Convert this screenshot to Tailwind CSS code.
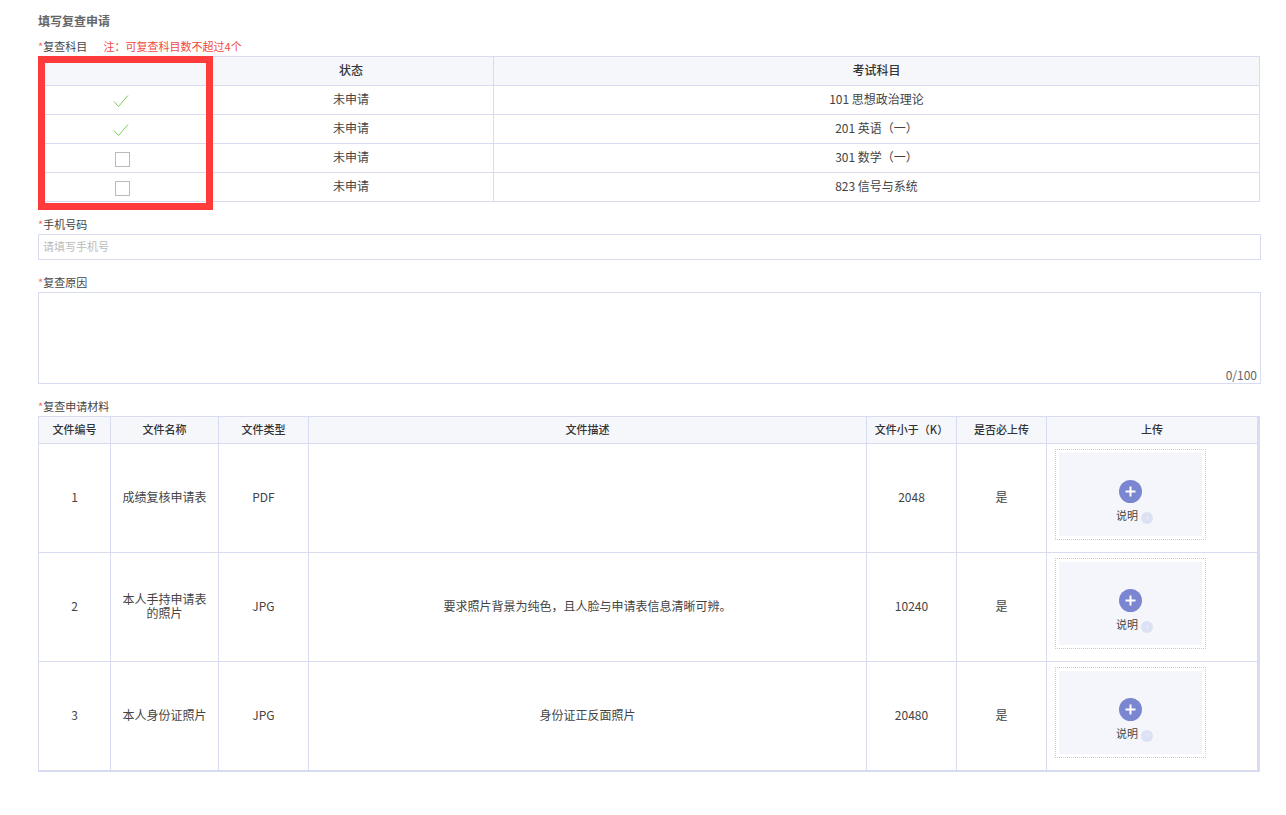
<!DOCTYPE html>
<html lang="zh-CN">
  <head>
    <meta charset="UTF-8" />
    <title>填写复查申请</title>
    <script src="https://cdn.jsdelivr.net/npm/@tailwindcss/browser@4"></script>
  </head>
  <body class="bg-white font-['Noto_Sans_CJK_SC','Noto_Sans',sans-serif] text-[11px] text-[#444]">
    <main class="ml-[38px] w-[1223px] pt-[13px] pb-[43px]">
      <h2 class="h-[17px] text-[12px] leading-[15px] font-bold text-[#666]">填写复查申请</h2>

      <!-- subjects -->
      <div class="mt-[9px] h-[17px] leading-[15px]">
        <span class="text-[#f56c6c]">*</span>复查科目
        <span class="ml-[14px] text-[#f04a3e]">注：可复查科目数不超过4个</span>
      </div>
      <div class="relative w-[1222px]">
        <table class="w-full table-fixed border-collapse text-center text-[12px] [&_td]:pb-[2px] [&_th]:pb-[2px]">
          <colgroup>
            <col class="w-[170px]" />
            <col class="w-[285px]" />
            <col />
          </colgroup>
          <thead>
            <tr class="h-[29px] bg-[#f5f7fb] text-[#333]">
              <th class="border border-[#d8dcf0] font-medium"></th>
              <th class="border border-[#d8dcf0] font-medium">状态</th>
              <th class="border border-[#d8dcf0] font-medium">考试科目</th>
            </tr>
          </thead>
          <tbody>
            <tr class="h-[29px]">
              <td class="border border-[#d8dcf0] pr-[5px]">
                <svg class="mx-auto mt-[4px] block" width="16" height="13" viewBox="0 0 16 13" fill="none" stroke="#7ccb52" stroke-width="1"><path d="M1 6.5 L5.5 11.5 L15 .5" /></svg>
              </td>
              <td class="border border-[#d8dcf0]">未申请</td>
              <td class="border border-[#d8dcf0]">101 思想政治理论</td>
            </tr>
            <tr class="h-[29px]">
              <td class="border border-[#d8dcf0] pr-[5px]">
                <svg class="mx-auto mt-[4px] block" width="16" height="13" viewBox="0 0 16 13" fill="none" stroke="#7ccb52" stroke-width="1"><path d="M1 6.5 L5.5 11.5 L15 .5" /></svg>
              </td>
              <td class="border border-[#d8dcf0]">未申请</td>
              <td class="border border-[#d8dcf0]">201 英语（一）</td>
            </tr>
            <tr class="h-[29px]">
              <td class="border border-[#d8dcf0] pr-[3px]"><div class="mx-auto mt-[4px] h-[15px] w-[15px] border border-[#bbb]"></div></td>
              <td class="border border-[#d8dcf0]">未申请</td>
              <td class="border border-[#d8dcf0]">301 数学（一）</td>
            </tr>
            <tr class="h-[29px]">
              <td class="border border-[#d8dcf0] pr-[3px]"><div class="mx-auto mt-[4px] h-[15px] w-[15px] border border-[#bbb]"></div></td>
              <td class="border border-[#d8dcf0]">未申请</td>
              <td class="border border-[#d8dcf0]">823 信号与系统</td>
            </tr>
          </tbody>
        </table>
        <!-- annotation box drawn over the table -->
        <div class="absolute top-0 left-0 h-[154px] w-[175px] border-[7px] border-[#ff3b3b]"></div>
      </div>

      <!-- phone -->
      <div class="mt-[15px] h-[17px] leading-[15px]"><span class="text-[#f56c6c]">*</span>手机号码</div>
      <div class="h-[26px] border border-[#d8dcf0] pl-[4px] leading-[22px] text-[#bbb]">请填写手机号</div>

      <!-- reason -->
      <div class="mt-[15px] h-[17px] leading-[15px]"><span class="text-[#f56c6c]">*</span>复查原因</div>
      <div class="flex h-[92px] items-end justify-end border border-[#d8dcf0] pr-[3px] pb-[1px] text-[12px] leading-[15px] text-[#666]">0/100</div>

      <!-- materials -->
      <div class="mt-[15px] h-[17px] leading-[15px]"><span class="text-[#f56c6c]">*</span>复查申请材料</div>
      <div class="w-[1222px] border-r-2 border-b-2 border-[#d8dcf0]">
        <table class="w-full table-fixed border-collapse text-center text-[12px] [&_td]:pb-[2px] [&_th]:pb-[2px]">
          <colgroup>
            <col class="w-[72px]" />
            <col class="w-[108px]" />
            <col class="w-[90px]" />
            <col class="w-[558px]" />
            <col class="w-[90px]" />
            <col class="w-[90px]" />
            <col />
          </colgroup>
          <thead>
            <tr class="h-[27px] bg-[#f5f7fb] text-[11px] text-[#333]">
              <th class="border border-[#d8dcf0] font-medium">文件编号</th>
              <th class="border border-[#d8dcf0] font-medium">文件名称</th>
              <th class="border border-[#d8dcf0] font-medium">文件类型</th>
              <th class="border border-[#d8dcf0] font-medium">文件描述</th>
              <th class="border border-[#d8dcf0] font-medium">文件小于（K）</th>
              <th class="border border-[#d8dcf0] font-medium">是否必上传</th>
              <th class="border border-[#d8dcf0] font-medium">上传</th>
            </tr>
          </thead>
          <tbody>
            <tr class="h-[109px]">
              <td class="border border-[#d8dcf0]">1</td>
              <td class="border border-[#d8dcf0]">成绩复核申请表</td>
              <td class="border border-[#d8dcf0]">PDF</td>
              <td class="border border-[#d8dcf0]"></td>
              <td class="border border-[#d8dcf0]">2048</td>
              <td class="border border-[#d8dcf0]">是</td>
              <td class="border border-[#d8dcf0] pt-[5px] pl-[8px] align-top">
                <div class="h-[91px] w-[151px] border border-dotted border-[#ccc] p-[3px]">
                  <div class="flex h-full flex-col items-center bg-[#f5f6fb] pt-[27px]">
                    <svg width="23" height="23" viewBox="0 0 23 23"><circle cx="11.5" cy="11.5" r="11.5" fill="#7b86d0" /><path d="M11.5 6.5v10M6.5 11.5h10" stroke="#fff" stroke-width="2" /></svg>
                    <div class="mt-[5px] ml-[8px] flex h-[14px] items-center text-[11px] leading-[14px]">说明<span class="mt-[5px] ml-[3px] flex h-[12px] w-[12px] items-center justify-center rounded-full bg-[#dde1f4]"><span class="h-[3px] w-px bg-[#eef0fa]"></span></span></div>
                  </div>
                </div>
              </td>
            </tr>
            <tr class="h-[109px]">
              <td class="border border-[#d8dcf0]">2</td>
              <td class="border border-[#d8dcf0] px-[10px] leading-[14px]">本人手持申请表的照片</td>
              <td class="border border-[#d8dcf0]">JPG</td>
              <td class="border border-[#d8dcf0]">要求照片背景为纯色，且人脸与申请表信息清晰可辨。</td>
              <td class="border border-[#d8dcf0]">10240</td>
              <td class="border border-[#d8dcf0]">是</td>
              <td class="border border-[#d8dcf0] pt-[5px] pl-[8px] align-top">
                <div class="h-[91px] w-[151px] border border-dotted border-[#ccc] p-[3px]">
                  <div class="flex h-full flex-col items-center bg-[#f5f6fb] pt-[27px]">
                    <svg width="23" height="23" viewBox="0 0 23 23"><circle cx="11.5" cy="11.5" r="11.5" fill="#7b86d0" /><path d="M11.5 6.5v10M6.5 11.5h10" stroke="#fff" stroke-width="2" /></svg>
                    <div class="mt-[5px] ml-[8px] flex h-[14px] items-center text-[11px] leading-[14px]">说明<span class="mt-[5px] ml-[3px] flex h-[12px] w-[12px] items-center justify-center rounded-full bg-[#dde1f4]"><span class="h-[3px] w-px bg-[#eef0fa]"></span></span></div>
                  </div>
                </div>
              </td>
            </tr>
            <tr class="h-[108px] [&>td]:border-b-0">
              <td class="border border-[#d8dcf0]">3</td>
              <td class="border border-[#d8dcf0]">本人身份证照片</td>
              <td class="border border-[#d8dcf0]">JPG</td>
              <td class="border border-[#d8dcf0]">身份证正反面照片</td>
              <td class="border border-[#d8dcf0]">20480</td>
              <td class="border border-[#d8dcf0]">是</td>
              <td class="border border-[#d8dcf0] pt-[5px] pl-[8px] align-top">
                <div class="h-[91px] w-[151px] border border-dotted border-[#ccc] p-[3px]">
                  <div class="flex h-full flex-col items-center bg-[#f5f6fb] pt-[27px]">
                    <svg width="23" height="23" viewBox="0 0 23 23"><circle cx="11.5" cy="11.5" r="11.5" fill="#7b86d0" /><path d="M11.5 6.5v10M6.5 11.5h10" stroke="#fff" stroke-width="2" /></svg>
                    <div class="mt-[5px] ml-[8px] flex h-[14px] items-center text-[11px] leading-[14px]">说明<span class="mt-[5px] ml-[3px] flex h-[12px] w-[12px] items-center justify-center rounded-full bg-[#dde1f4]"><span class="h-[3px] w-px bg-[#eef0fa]"></span></span></div>
                  </div>
                </div>
              </td>
            </tr>
          </tbody>
        </table>
      </div>
    </main>
  </body>
</html>
